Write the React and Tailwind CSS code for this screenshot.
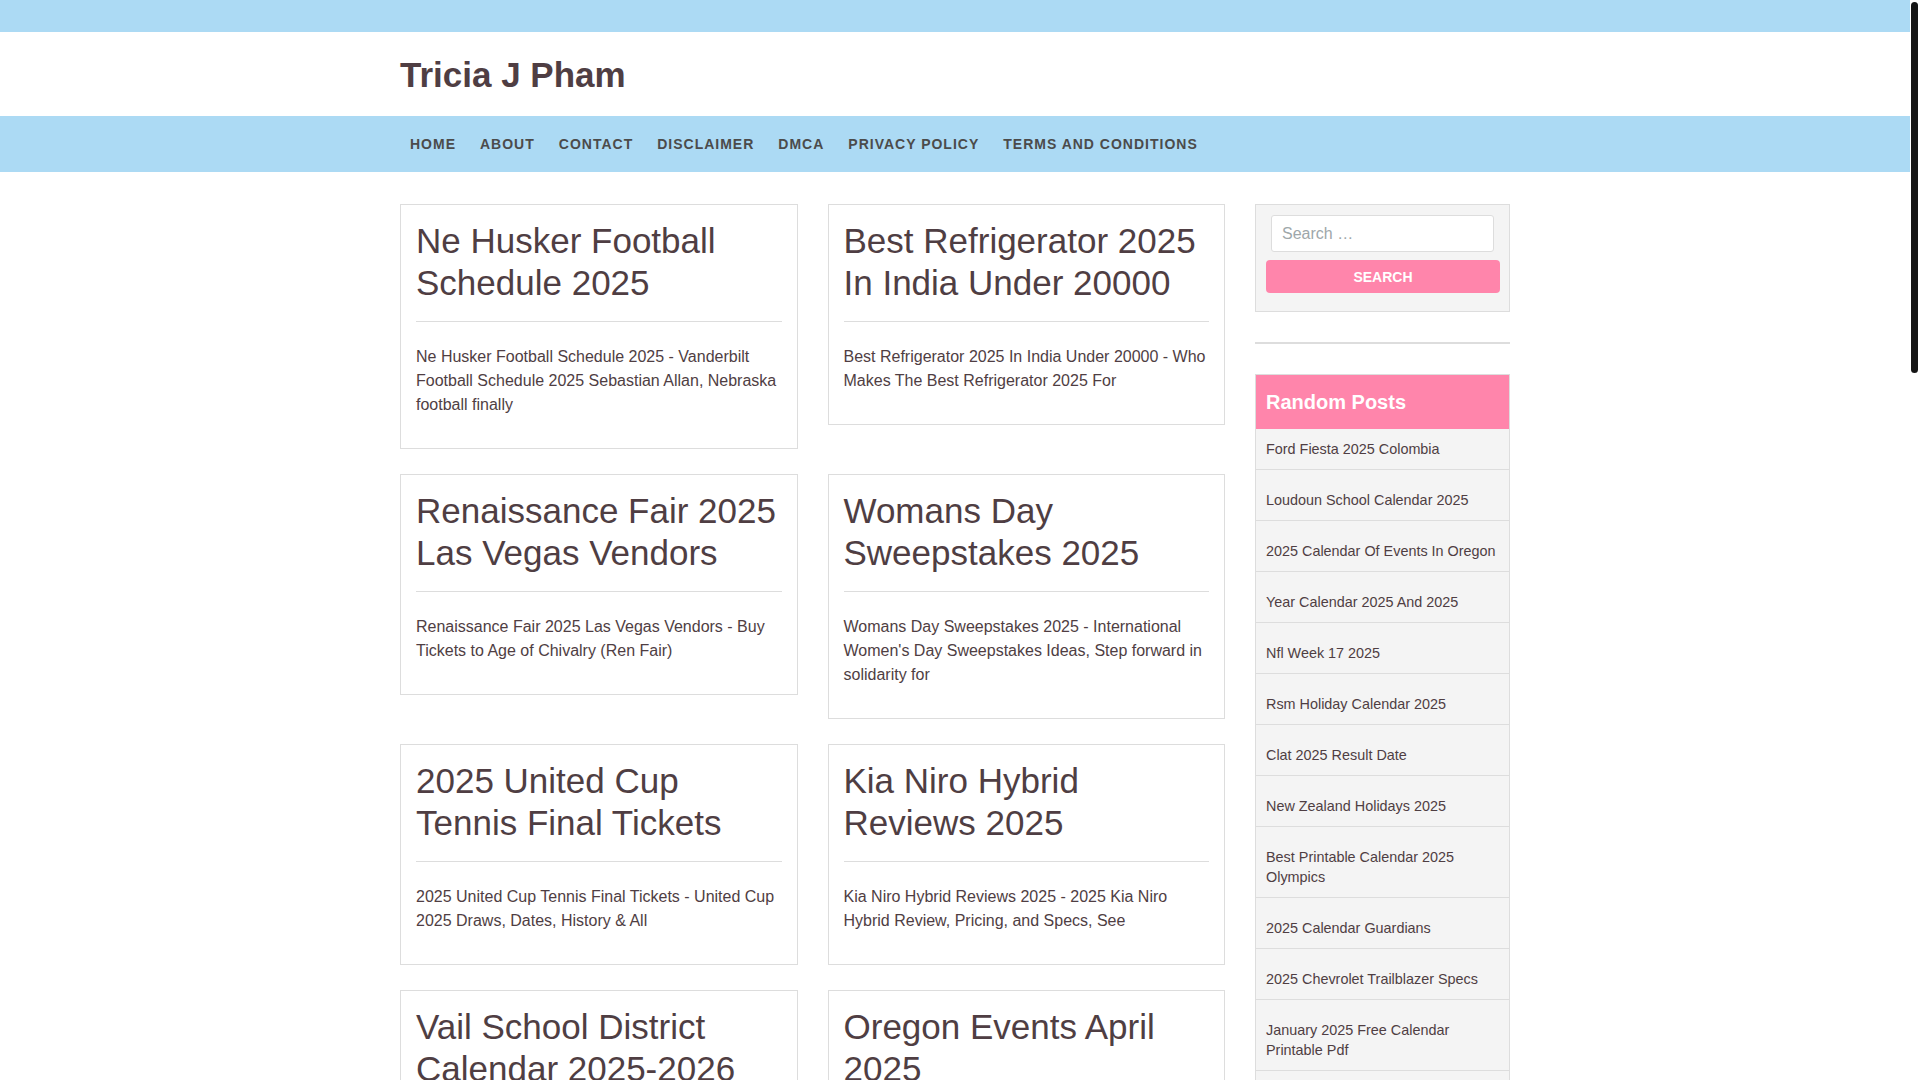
const menu = ["Home", "About", "Contact", "Disclaimer", "DMCA", "Privacy Policy", "Terms and Conditions"];

const posts = [
  {
    title: "Ne Husker Football Schedule 2025",
    excerpt: "Ne Husker Football Schedule 2025 - Vanderbilt Football Schedule 2025 Sebastian Allan, Nebraska football finally",
  },
  {
    title: "Best Refrigerator 2025 In India Under 20000",
    excerpt: "Best Refrigerator 2025 In India Under 20000 - Who Makes The Best Refrigerator 2025 For",
  },
  {
    title: "Renaissance Fair 2025 Las Vegas Vendors",
    excerpt: "Renaissance Fair 2025 Las Vegas Vendors - Buy Tickets to Age of Chivalry (Ren Fair)",
  },
  {
    title: "Womans Day Sweepstakes 2025",
    excerpt: "Womans Day Sweepstakes 2025 - International Women's Day Sweepstakes Ideas, Step forward in solidarity for",
  },
  {
    title: "2025 United Cup Tennis Final Tickets",
    excerpt: "2025 United Cup Tennis Final Tickets - United Cup 2025 Draws, Dates, History & All",
  },
  {
    title: "Kia Niro Hybrid Reviews 2025",
    excerpt: "Kia Niro Hybrid Reviews 2025 - 2025 Kia Niro Hybrid Review, Pricing, and Specs, See",
  },
  {
    title: "Vail School District Calendar 2025-2026",
    excerpt: "Vail School District Calendar 2025-2026 - Vail School District Calendar 2025 2026, School Year Dates",
  },
  {
    title: "Oregon Events April 2025",
    excerpt: "Oregon Events April 2025 - Things To Do In Oregon This April, Festivals and Events",
  },
];

const randomPosts = [
  "Ford Fiesta 2025 Colombia",
  "Loudoun School Calendar 2025",
  "2025 Calendar Of Events In Oregon",
  "Year Calendar 2025 And 2025",
  "Nfl Week 17 2025",
  "Rsm Holiday Calendar 2025",
  "Clat 2025 Result Date",
  "New Zealand Holidays 2025",
  "Best Printable Calendar 2025 Olympics",
  "2025 Calendar Guardians",
  "2025 Chevrolet Trailblazer Specs",
  "January 2025 Free Calendar Printable Pdf",
  "Nba Schedule 2025 Today",
  "Lunar Calendar 2025 Chinese",
];

const PostCard = ({ post }) => (
  <article className="border border-[#dddddd] bg-white px-[15px] pt-[15px] pb-[15px]">
    <h2 className="text-[35px] leading-[41.5px] font-normal text-[#4f3e43]">
      <a href="#">{post.title}</a>
    </h2>
    <hr className="mt-[18px] border-0 border-t border-[#dddddd]" />
    <p className="mt-[23px] mb-4 text-base leading-6 text-[#4f3e43]">{post.excerpt}</p>
  </article>
);

export default function App() {
  return (
    <div className="min-h-screen bg-white pr-[10px] font-['Liberation_Sans',Arial,sans-serif] text-[#4f3e43]">
      <div className="h-8 bg-[#acdaf4]" />

      {/* Site title */}
      <header className="h-[84px]">
        <div className="mx-auto flex h-full w-[1110px] items-center">
          <h1 className="text-[35px] font-bold leading-none text-[#4f3e43]">
            <a href="#">Tricia J Pham</a>
          </h1>
        </div>
      </header>

      {/* Menu */}
      <nav className="h-14 bg-[#acdaf4]">
        <div className="mx-auto flex h-full w-[1110px] items-center">
          <ul className="-ml-0.5 flex items-center">
            {menu.map((item) => (
              <li key={item}>
                <a href="#" className="block px-3 text-sm font-bold uppercase tracking-[1px] text-[#4b4b4b]">
                  {item}
                </a>
              </li>
            ))}
          </ul>
        </div>
      </nav>

      <main className="mx-auto flex w-[1110px] items-start gap-[30px] pt-8 pb-10">
        {/* Posts */}
        <div className="grid w-[825px] grid-cols-2 items-start gap-x-[30px] gap-y-[25px]">
          {posts.map((post) => (
            <PostCard key={post.title} post={post} />
          ))}
        </div>

        {/* Sidebar */}
        <aside className="w-[255px]">
          <div className="border border-[#dddddd] bg-[#f4f4f4] pt-[10px] pb-[18px] pl-[10px] pr-[9px]">
            <input
              type="search"
              placeholder="Search …"
              className="mx-[5px] block h-[37px] w-[223px] rounded-[3px] border border-[#dddddd] bg-white px-[10px] text-base text-[#4f3e43] placeholder:text-[#9ea7aa] outline-none"
            />
            <button className="mt-2 block h-[33px] w-full rounded-[4px] bg-[#ff85ab] text-sm font-bold uppercase text-white">
              Search
            </button>
          </div>

          <div className="mt-[30px] border-t-2 border-[#dddddd] pt-[30px]">
            <div className="border border-[#dddddd]">
              <h3 className="bg-[#ff85ab] px-[10px] py-[15px] text-xl font-bold leading-6 text-white">Random Posts</h3>
              <ul className="bg-[#f4f4f4]">
                {randomPosts.map((item, i) => (
                  <li
                    key={item}
                    className={`border-b border-[#dddddd] px-[10px] pt-[10px] pb-[10px] text-[14.4px] leading-5 ${i === 0 ? "" : "mt-[10px]"}`}
                  >
                    <a href="#" className="text-[#4f3e43]">{item}</a>
                  </li>
                ))}
              </ul>
            </div>
          </div>
        </aside>
      </main>

      {/* scrollbar thumb */}
      <div className="fixed top-[2px] right-[2px] h-[371px] w-[7px] rounded-full bg-[#151515]" />
    </div>
  );
}
